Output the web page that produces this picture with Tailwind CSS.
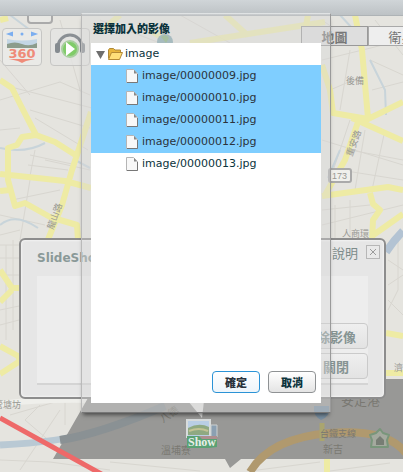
<!DOCTYPE html>
<html lang="zh-TW">
<head>
  <meta charset="UTF-8" />
  <meta name="viewport" content="width=device-width, initial-scale=1" />
  <title>選擇加入的影像</title>
  <script src="https://cdn.jsdelivr.net/npm/@tailwindcss/browser@4"></script>
</head>
<body class="relative min-h-screen overflow-hidden bg-[#e5e4df] font-['DejaVu_Sans','Noto_Sans_CJK_TC',sans-serif] text-[11px] text-[#0b333c]">

  <!-- map -->
  <svg class="absolute top-0 left-0" width="403" height="472" viewBox="0 0 403 472" fill="none" aria-hidden="true">
    <g stroke="#d8d6d0" stroke-width="1">
      <path d="M0 100L60 82L90 95M30 110L90 128M15 88L92 108M0 130L20 128M35 118L88 150M30 155L72 164M28 165L68 170M30 176L35 150M12 200L60 190M0 215L45 225M30 180L20 240M45 160L90 170M0 235L20 230M0 245H19M0 258H19M0 275H19M0 310L19 306M0 325L19 320M6 245V340M13 240V330M60 20L80 90M0 60L30 95" />
      <path d="M322 60L403 40M330 90L365 75M340 110L350 50M370 60L403 75M372 90L403 82M322 140L403 165M330 180L350 120M340 170L403 180M350 150L403 160M365 130L355 190M385 130L372 190M322 210L370 205M335 205V238M350 200V240M322 225L403 205M388 260L403 270M388 285L403 275M388 300L403 315M388 310L398 290V240M322 20L350 40M375 20L403 55M100 20L160 43M180 15L230 43" />
      <path d="M20 470L60 410M40 405L25 420L60 450M0 460L50 462L110 470M110 462L200 471M250 471L320 462M330 471L390 463M65 400V425M10 415L55 402" />
    </g>
    <g stroke="#c8d4da" stroke-width="2">
      <path d="M0 148Q25 154 45 143M0 225Q15 212 38 228M75 160L90 168M10 15L30 30M340 15L352 28M370 60L385 90L386 115M340 150L328 178" />
    </g>
    <path d="M0 445Q60 442 95 432T170 395" stroke="#b9c9d4" stroke-width="7" />
    <path d="M403 231Q394 240 386 252" stroke="#b3c3d3" stroke-width="8" />
    <path d="M0 404Q40 399 90 400" stroke="#efefeb" stroke-width="6" />
    <g stroke="#eeeba4" stroke-width="6" stroke-linejoin="round">
      <path d="M0 80L12 88L20 104L36 135L55 142L77 156M36 135L22 137L17 145L8 148L8 180L15 206L25 203L50 217L77 225L78 240M0 174L65 181L91 188M91 112L72 170L62 205L47 242M0 191L10 190M0 270L12 288H20M12 290L0 302M0 346L18 356L20 361L0 374M0 20L8 18" />
      <path d="M355 15L362 50L368 118M322 65L330 90L333 113L368 119L403 102M352 118L403 141M358 122L345 160L325 195M322 196L388 187L403 190M370 193L373 204L380 210L373 220L372 240M372 236L403 214M386 333L403 336M386 373H403M308 15L306 26M327 415V472" />
      <path d="M190 43L325 22M225 15L245 33M100 32L120 15M150 30L170 43" opacity=".8" />
    </g>
    <rect x="28" y="12" width="24" height="11" rx="3" fill="#e8e8e4" stroke="#aaa" stroke-width="2" />
    <rect x="329" y="169" width="22" height="13" rx="2" fill="#f0f0ec" stroke="#aaa" stroke-width="2" />
    <g fill="#999994" font-family="Noto Sans CJK TC, sans-serif" font-size="9">
      <text x="332" y="179" font-family="Liberation Sans, Noto Sans CJK TC, sans-serif">173</text>
      <text x="346" y="84">後備</text>
      <text x="-6" y="408">管塘坊</text>
      <text x="342" y="237">人商環</text>
      <text transform="translate(53 230) rotate(-70)">龍山路</text>
      <text transform="translate(352 157) rotate(-70)">重安路</text>
      <text x="394" y="371">濟</text>
    </g>
    <circle cx="165" cy="42" r="8" fill="#87a9b0" />
    <path d="M161 37q5-4 8 1l-3 5z" fill="#86b07c" />
    <path d="M92 391L53 459H225L230 468L241 459H403V379H386V391Z" fill="#989896" />
    <path d="M60 440Q100 434 165 406" stroke="#8a9194" stroke-width="8" />
    <path d="M250 472Q270 438 330 433T408 456" stroke="#b0996e" stroke-width="8" />
    <path d="M322 423V441" stroke="#aaa56f" stroke-width="5" />
    <path d="M314 406h15q2 10-8 14q-8-4-7-14z" fill="#788ea0" />
    <g fill="#7a7872" font-family="Noto Sans CJK TC, sans-serif" font-size="10">
      <text x="320" y="437" font-size="9">台鐵支線</text>
      <text x="323" y="453">新吉</text>
      <text x="341" y="405" font-size="13">安定港</text>
      <text x="161" y="454">溫埔寮</text>
      <text transform="translate(163 423) rotate(-35)">八德</text>
    </g>
    <path d="M380 429l3 4l6 2l-2 5l1 7h-17l1-7l-2-5l6-2z" fill="#a4a99e" stroke="#79967b" stroke-width="2" stroke-linejoin="round" />
    <path d="M376 440l4-4l4 4v5h-8z" fill="#777d74" />
    <path d="M0 418L105 476" stroke="#ee6969" stroke-width="5" />
    <path d="M188 401H204L202 418Z" fill="#e0e0de" />
  </svg>

  <header class="absolute inset-x-0 top-0 h-4 border-b border-[#aeb3b6] bg-linear-to-b from-[#d0d5d8] to-[#bdc2c5]"></header>

  <!-- map tools -->
  <div class="absolute top-7 left-[2px] flex gap-2">
    <button type="button" aria-label="360" class="h-[38px] w-10 rounded-sm border border-[#c6c6c4] bg-[#ebebe9]/80">
      <svg width="38" height="36" viewBox="0 0 38 36">
        <path d="M6 5l3-1v2zM32 5l-3-1v2z" fill="#7baef0" stroke="#7baef0" stroke-width="2" /><circle cx="19" cy="5" r="1.5" fill="#7baef0" />
        <path d="M4 10q15 3 30 0v9H4z" fill="#c3d6e5" /><path d="M4 15q8-3 15 0t15-1v5H4z" fill="#8c9c8c" />
        <text x="19" y="29" text-anchor="middle" font-family="DejaVu Sans, sans-serif" font-size="13" font-weight="bold" fill="#ef8b79">360</text>
        <path d="M6 30h26l-9 2l-4 2l-4-2z" fill="#ef8b79" />
      </svg>
    </button>
    <button type="button" aria-label="播放" class="h-[38px] w-10 rounded-sm border border-[#c6c6c4] bg-[#e4e4e2]/80">
      <svg width="38" height="36" viewBox="0 0 38 36">
        <path d="M7 18a12 12 0 0 1 24 0" fill="none" stroke="#8a8f94" stroke-width="3" />
        <rect x="4" y="14" width="5" height="10" rx="2" fill="#858b90" /><rect x="29" y="14" width="5" height="10" rx="2" fill="#858b90" />
        <circle cx="19" cy="20" r="8" fill="#80cc69" stroke="#a9cfa0" stroke-width="2" />
        <path d="M15 13l9 7l-9 7z" fill="#fff" />
      </svg>
    </button>
  </div>

  <div class="absolute top-[26px] right-0 left-[301px] flex overflow-hidden font-['Noto_Sans_CJK_TC',sans-serif] text-[13px] leading-none font-bold text-[#777]">
    <button type="button" class="h-5 w-[67px] shrink-0 border border-[#999] bg-[#dedede]">地圖</button>
    <button type="button" class="h-5 w-[67px] shrink-0 border border-[#a9a9a9] bg-[#eee] font-normal">衛星</button>
  </div>

  <!-- slide show panel -->
  <section class="absolute top-[238px] left-[19px] flex h-[161px] w-[367px] flex-col rounded-md border-2 border-[#8d8d8d] bg-[#e6e6e6] px-4 pb-3 shadow-[inset_0_0_3px_#fff]">
    <div class="flex h-[36px] items-center pb-3">
      <h2 class="grow pt-3 text-xs font-bold text-[#8a9998]">SlideShow</h2>
      <a href="#" class="mr-2 font-['Noto_Sans_CJK_TC',sans-serif] text-[13px] leading-none text-[#7d8c8b]">說明</a>
      <button type="button" aria-label="關閉視窗" class="-mr-3 flex size-[14px] items-center justify-center border border-[#b7b7b7] bg-[#e9e9e9]">
        <svg width="8" height="8" viewBox="0 0 8 8"><path d="M1 1l6 6M7 1L1 7" stroke="#9b9b9b" /></svg>
      </button>
    </div>
    <div class="flex grow flex-col items-end justify-end gap-1 border-b-2 border-[#d4d4d4] bg-[#ededed] pb-1 font-['Noto_Sans_CJK_TC',sans-serif] text-[13px] leading-none font-bold text-[#869493]">
      <button type="button" class="h-[26px] w-24 rounded-sm border border-[#cacaca] bg-linear-to-b from-[#efefef] to-[#e3e3e3] pl-5">移除影像</button>
      <button type="button" class="h-[26px] w-24 rounded-sm border border-[#cacaca] bg-linear-to-b from-[#efefef] to-[#e3e3e3] pl-8">關閉</button>
    </div>
  </section>

  <svg class="absolute top-[418px] left-[185px]" width="36" height="32" viewBox="0 0 36 32" aria-hidden="true">
    <path d="M2 2h23v17H2z" fill="#b9cee4" stroke="#d8dcdc" stroke-width="2" />
    <path d="M3 10q11-6 21-1v8H3z" fill="#8fa981" /><path d="M4 13q10-4 19 0" stroke="#c3c394" stroke-width="2" fill="none" />
    <path d="M26 7h6v12h-6z" fill="#8ba0b2" stroke="#ccd0d0" /><path d="M12 18h20v3H12z" fill="#ad8f8f" />
    <path d="M2 18h12l3 3h15v8l-8 1H2z" fill="#5aa274" />
    <text x="17" y="28" text-anchor="middle" font-family="Liberation Serif, serif" font-weight="bold" font-size="12" fill="#e8efe9">Show</text>
  </svg>

  <!-- file picker -->
  <main role="dialog" aria-labelledby="pickerTitle" class="absolute top-[13px] left-[81px] w-[250px] border border-t-[#e0e3e4] border-r-[#9a9a9a] border-b-[#777] border-l-[#bababa] bg-[#d8d8d8]/40 px-[9px] pb-[9px] shadow-[0_4px_4px_-2px_rgba(0,0,0,0.5)]">
    <h1 id="pickerTitle" class="h-[29px] pt-2 pl-[2px] font-['Noto_Sans_CJK_TC',sans-serif] text-[11px] leading-3 font-black">選擇加入的影像</h1>
    <div class="flex h-[360px] flex-col bg-white">
      <ul role="tree" class="grow leading-[22px]">
        <li role="treeitem" aria-expanded="true">
          <div class="flex h-[22px] items-center pl-[5px]">
            <svg width="9" height="9" viewBox="0 0 9 9"><path d="M0 1h9L4.500 9z" fill="#6e6e6e" /></svg>
            <svg class="ml-[3px]" width="15" height="12" viewBox="0 0 15 12">
              <path d="M.5 10.500V2l1-1.500h4L7 2h5.500v3" fill="#e8b53c" stroke="#b08a38" />
              <path d="M.5 11.500L3.500 4.500h11l-3 7z" fill="#ffdf79" stroke="#b58a35" />
            </svg>
            <span class="ml-[2px]">image</span>
          </div>
          <ul role="group">
            <li role="treeitem" aria-selected="true" class="flex h-[22px] items-center gap-1 bg-[#7fceff] pl-[35px] text-[#2b333c]">
              <svg width="12" height="14" viewBox="0 0 12 14"><path d="M.5.5h7l4 4v9H.5z" fill="#f8f8f8" stroke="#b5b5b5" /><path d="M8 1v3.500h3z" fill="#888" /><path d="M1 13.500h10.500V5" fill="none" stroke="#777" /></svg>
              <span>image/00000009.jpg</span>
            </li>
            <li role="treeitem" aria-selected="true" class="flex h-[22px] items-center gap-1 bg-[#7fceff] pl-[35px] text-[#2b333c]">
              <svg width="12" height="14" viewBox="0 0 12 14"><path d="M.5.5h7l4 4v9H.5z" fill="#f8f8f8" stroke="#b5b5b5" /><path d="M8 1v3.500h3z" fill="#888" /><path d="M1 13.500h10.500V5" fill="none" stroke="#777" /></svg>
              <span>image/00000010.jpg</span>
            </li>
            <li role="treeitem" aria-selected="true" class="flex h-[22px] items-center gap-1 bg-[#7fceff] pl-[35px] text-[#2b333c]">
              <svg width="12" height="14" viewBox="0 0 12 14"><path d="M.5.5h7l4 4v9H.5z" fill="#f8f8f8" stroke="#b5b5b5" /><path d="M8 1v3.500h3z" fill="#888" /><path d="M1 13.500h10.500V5" fill="none" stroke="#777" /></svg>
              <span>image/00000011.jpg</span>
            </li>
            <li role="treeitem" aria-selected="true" class="flex h-[22px] items-center gap-1 bg-[#7fceff] pl-[35px] text-[#2b333c]">
              <svg width="12" height="14" viewBox="0 0 12 14"><path d="M.5.5h7l4 4v9H.5z" fill="#f8f8f8" stroke="#b5b5b5" /><path d="M8 1v3.500h3z" fill="#888" /><path d="M1 13.500h10.500V5" fill="none" stroke="#777" /></svg>
              <span>image/00000012.jpg</span>
            </li>
            <li role="treeitem" aria-selected="false" class="flex h-[22px] items-center gap-1 pl-[35px]">
              <svg width="12" height="14" viewBox="0 0 12 14"><path d="M.5.5h7l4 4v9H.5z" fill="#f8f8f8" stroke="#b5b5b5" /><path d="M8 1v3.500h3z" fill="#888" /><path d="M1 13.500h10.500V5" fill="none" stroke="#777" /></svg>
              <span>image/00000013.jpg</span>
            </li>
          </ul>
        </li>
      </ul>
      <div class="flex justify-end gap-2 pr-[5px] pb-[10px] font-['Noto_Sans_CJK_TC',sans-serif] text-[11px] leading-none font-black">
        <button type="button" class="h-[22px] w-12 rounded-[4px] border border-[#2b93d6] bg-linear-to-b from-white to-[#eef5fa] text-[#2b333c]">確定</button>
        <button type="button" class="h-[22px] w-12 rounded-[4px] border border-[#8f9294] bg-linear-to-b from-white to-[#e4e4e4]">取消</button>
      </div>
    </div>
  </main>
</body>
</html>
